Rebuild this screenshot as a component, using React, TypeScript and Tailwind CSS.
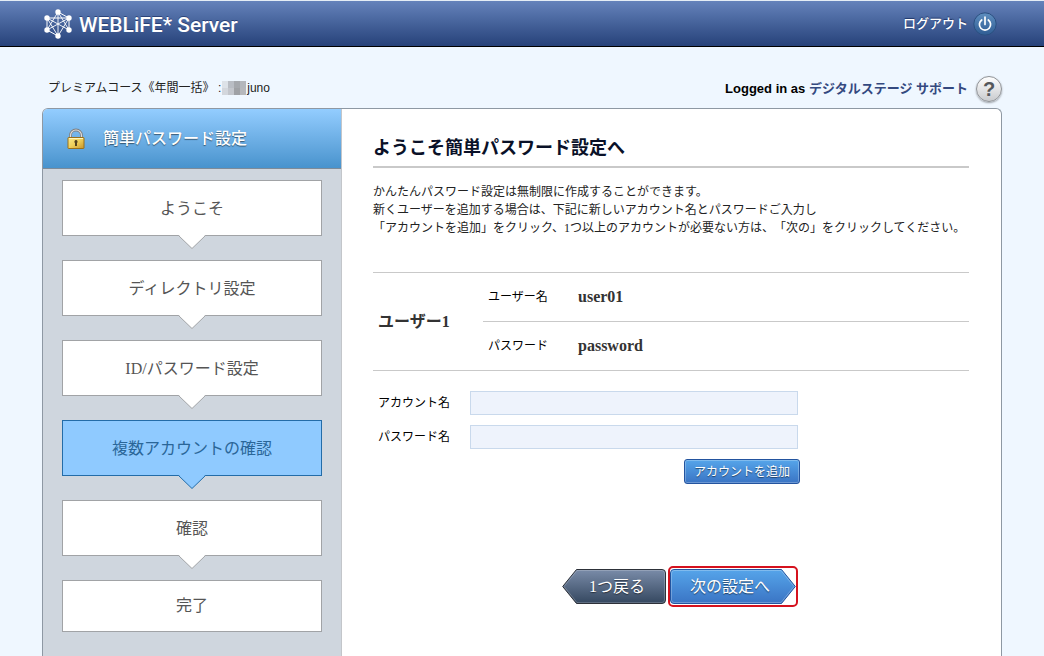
import { useState } from "react";
import type { ReactNode } from "react";

const steps = [
  { id: "welcome", label: "ようこそ" },
  { id: "directory", label: "ディレクトリ設定" },
  { id: "password", label: "ID/パスワード設定" },
  { id: "accounts", label: "複数アカウントの確認" },
  { id: "confirm", label: "確認" },
  { id: "done", label: "完了" },
];

const users = [{ title: "ユーザー1", name: "user01", password: "password" }];

const mosaic = [
  "bg-[#dde2e8]",
  "bg-[#b9bdc4]",
  "bg-[#a5a8ad]",
  "bg-[#b4b7bc]",
  "bg-[#d3d7dd]",
  "bg-[#c3c6cc]",
  "bg-[#9fa1a5]",
  "bg-[#b6b8bc]",
];

const nodes = [
  [14, 3],
  [3, 9],
  [25, 9],
  [3, 21],
  [25, 21],
  [14, 27],
];

function Logo() {
  return (
    <svg viewBox="0 0 28 30" className="h-[30px] w-7" aria-hidden="true">
      <g stroke="#fff" fill="none">
        <path d="M3 9h22M3 9v12M25 9v12M14 3l11 6M3 21l11 6" strokeWidth="1" />
        <path d="M3 9l22 12M25 9 3 21M14 3v24M14 3 3 21M3 9l11 18M25 9 14 27M14 3l11 18" strokeWidth="0.9" />
      </g>
      {nodes.map(([x, y]) => (
        <circle key={`${x}-${y}`} cx={x} cy={y} r="2.7" fill="#fff" />
      ))}
    </svg>
  );
}

function PowerIcon() {
  return (
    <svg viewBox="0 0 24 24" className="size-6" aria-hidden="true">
      <defs>
        <linearGradient id="power" x1="0" y1="0" x2="0" y2="1">
          <stop offset="0" stopColor="#5f8fc0" />
          <stop offset="1" stopColor="#2f5c93" />
        </linearGradient>
      </defs>
      <circle cx="12" cy="12" r="11.2" fill="url(#power)" stroke="#2b4f80" />
      <path
        d="M8.700 8a5.600 5.600 0 1 0 6.600 0M12 5v7.500"
        fill="none"
        stroke="#fff"
        strokeWidth="1.7"
        strokeLinecap="round"
      />
    </svg>
  );
}

function LockIcon() {
  return (
    <svg viewBox="0 0 18 22" className="h-[22px] w-[18px]" aria-hidden="true">
      <defs>
        <linearGradient id="lock" x1="0" y1="0" x2="1" y2="1">
          <stop offset="0" stopColor="#fdeb8c" />
          <stop offset="0.5" stopColor="#eecf5a" />
          <stop offset="1" stopColor="#c8942a" />
        </linearGradient>
      </defs>
      <path d="M3.500 10V7.500a5.500 5.500 0 0 1 11 0V10" fill="none" stroke="#7c7f82" strokeWidth="2.800" />
      <path d="M3.500 10V7.500a5.500 5.500 0 0 1 11 0V10" fill="none" stroke="#dedede" strokeWidth="1.200" />
      <rect x="1" y="9.5" width="16" height="11" rx="0.6" fill="url(#lock)" stroke="#9a701a" />
      <path d="M2 10.5h14" stroke="#fff6bd" />
      <path d="M9 12a1.700 1.700 0 0 1 1 3v3H8v-3a1.700 1.700 0 0 1 1-3z" fill="#54421c" />
    </svg>
  );
}

function Step({ label, active, last }: { label: string; active: boolean; last: boolean }) {
  return (
    <li>
      <a
        href="#"
        aria-current={active ? "step" : undefined}
        className={`flex items-center justify-center border text-base ${last ? "h-[52px]" : "h-14 pt-0.5"} ${
          active ? "border-[#236ca8] bg-[#8fcaff] text-[#2a6698]" : "border-[#a1a3a6] bg-white text-[#555]"
        }`}
      >
        {label}
      </a>
      {!last && (
        <svg
          viewBox="0 0 28 14"
          className={`relative mx-auto -mt-px block h-3.5 w-7 ${
            active ? "fill-[#8fcaff] stroke-[#236ca8]" : "fill-white stroke-[#a1a3a6]"
          }`}
          aria-hidden="true"
        >
          <path d="M1 0h26L14 13z" stroke="none" />
          <path d="M.5.5 14 13.5 27.5.5" />
        </svg>
      )}
    </li>
  );
}

function TextField({ id, label, value, onChange }: { id: string; label: string; value: string; onChange: (v: string) => void }) {
  return (
    <div className="flex items-center">
      <label htmlFor={id} className="w-[97px] shrink-0 pl-[5px] text-xs">
        {label}
      </label>
      <input
        id={id}
        type="text"
        value={value}
        onChange={(e) => onChange(e.target.value)}
        className="h-6 w-[328px] border border-[#c9d9ec] bg-[#eef3fc] px-2 text-xs outline-none"
      />
    </div>
  );
}

function ArrowButton({ direction, children }: { direction: "back" | "next"; children: ReactNode }) {
  const back = direction === "back";
  return (
    <button
      type="button"
      className={`relative isolate h-[35px] text-base leading-none text-white text-shadow-[0_1px_1px_rgb(0_0_0/0.5)] ${
        back ? "w-[104px] pl-1.5" : "w-[126px] pr-1.5"
      }`}
    >
      <svg
        viewBox={back ? "0 0 104 35" : "0 0 126 35"}
        className="absolute inset-0 -z-10 size-full"
        aria-hidden="true"
      >
        <defs>
          <linearGradient id={direction} x1="0" y1="0" x2="0" y2="1">
            <stop offset="0" stopColor={back ? "#7a8ca9" : "#56a5ea"} />
            <stop offset="1" stopColor={back ? "#34475f" : "#3a74c4"} />
          </linearGradient>
        </defs>
        {back ? (
          <>
            <path d="M14.5.5H100a3.5 3.5 0 0 1 3.5 3.5v27a3.5 3.5 0 0 1-3.5 3.5H14.5L.7 17.5z" fill="url(#back)" stroke="#2d3139" />
            <path d="M15 1.5h85a2.5 2.5 0 0 1 2.5 2.5v27a2.5 2.5 0 0 1-2.5 2.5H15l-13-16z" fill="none" stroke="#fff" strokeOpacity="0.2" />
          </>
        ) : (
          <>
            <path d="M111.5.5H4A3.5 3.5 0 0 0 .5 4v27A3.5 3.5 0 0 0 4 34.5h107.5l13.8-17z" fill="url(#next)" stroke="#23549f" />
            <path d="M111 1.5H4A2.5 2.5 0 0 0 1.5 4v27A2.5 2.5 0 0 0 4 33.5h107l13-16z" fill="none" stroke="#fff" strokeOpacity="0.25" />
          </>
        )}
      </svg>
      {children}
    </button>
  );
}

export default function App() {
  const [account, setAccount] = useState("");
  const [password, setPassword] = useState("");

  return (
    <div className="flex min-h-screen flex-col bg-[#eff7ff] font-['Liberation_Serif','Noto_Sans_CJK_JP',serif] text-black [text-spacing-trim:space-all]">
      <header className="h-[47px] border-t border-b border-t-[#e4edf5] border-b-black bg-linear-to-b from-[#6583bb] to-[#27427a] font-['Roboto','Noto_Sans_CJK_JP',sans-serif] text-white">
        <div className="mx-auto flex h-full max-w-[960px] items-center justify-between pr-[5px] pl-0.5">
          <a href="#" className="flex items-center gap-[7px] text-shadow-[0_-1px_0_rgb(20_40_90/0.6)]">
            <Logo />
            <span className="pt-0.5 text-[21px] leading-6 font-medium">WEBLiFE* Server</span>
          </a>
          <a href="#" className="flex items-center gap-[5px] text-[13px] font-medium text-shadow-[0_-1px_1px_rgb(20_40_90/0.8)]">
            ログアウト
            <PowerIcon />
          </a>
        </div>
      </header>

      <div className="mx-auto flex w-full max-w-[960px] flex-1 flex-col">
        <div className="flex h-[61px] items-end justify-between pb-1.5 pl-1.5 font-['Liberation_Sans','Noto_Sans_CJK_JP',sans-serif]">
          <p className="flex h-7 items-center text-xs text-[#222]">
            プレミアムコース《年間一括》 :
            <span className="mx-px grid w-6 grid-cols-4" aria-hidden="true">
              {mosaic.map((shade, i) => (
                <span key={i} className={`h-[7px] ${shade}`} />
              ))}
            </span>
            juno
          </p>
          <div className="flex items-center gap-2 text-[13px] font-bold">
            <p>
              Logged in as <span className="text-[#34497f]">デジタルステージ サポート</span>
            </p>
            <button
              type="button"
              aria-label="ヘルプ"
              className="flex size-[26px] items-center justify-center rounded-full border border-[#8f9296] bg-linear-to-b from-white to-[#c9cbce] text-xl leading-none text-[#55585c] shadow-[0_1px_2px_rgb(0_0_0/0.35)]"
            >
              ?
            </button>
          </div>
        </div>

        <div className="flex flex-1 overflow-hidden rounded-t-md border border-b-0 border-[#8e98a3] bg-white">
          <nav className="w-[299px] shrink-0 border-r border-[#c3c6ca] bg-[#cfd6de]">
            <h2 className="flex h-[60px] items-center gap-[18px] border-b border-[#7d8b99] bg-linear-to-b from-[#93cdff] to-[#4893cd] pl-6 text-base font-medium text-white text-shadow-[0_1px_1px_rgb(0_0_0/0.5)]">
              <LockIcon />
              簡単パスワード設定
            </h2>
            <ol className="flex flex-col gap-[11px] px-[19px] pt-[11px] pb-6">
              {steps.map((step, i) => (
                <Step
                  key={step.id}
                  label={step.label}
                  active={step.id === "accounts"}
                  last={i === steps.length - 1}
                />
              ))}
            </ol>
          </nav>

          <main className="min-w-0 flex-1 pt-[25px] pr-8 pl-[31px]">
            <h1 className="border-b-2 border-[#c9c9c9] pb-1 text-lg leading-7 font-bold text-[#0a1128]">
              ようこそ簡単パスワード設定へ
            </h1>
            <p className="mt-[15px] text-xs leading-[18px] text-[#222]">
              かんたんパスワード設定は無制限に作成することができます。
              <br />
              新くユーザーを追加する場合は、下記に新しいアカウント名とパスワードご入力し
              <br />
              「アカウントを追加」をクリック、1つ以上のアカウントが必要ない方は、「次の」をクリックしてください。
            </p>

            <table className="mt-[35px] w-full border-collapse text-left">
              {users.map((user) => (
                <tbody key={user.title} className="border-y border-[#c9c9c9]">
                  <tr className="h-[49px]">
                    <th rowSpan={2} scope="rowgroup" className="w-[110px] pl-[5px] text-base font-bold text-[#333]">
                      {user.title}
                    </th>
                    <th scope="row" className="w-[90px] border-b border-[#c9c9c9] pl-[5px] text-xs font-normal">
                      ユーザー名
                    </th>
                    <td className="border-b border-[#c9c9c9] pl-[5px] font-bold text-[#333]">{user.name}</td>
                  </tr>
                  <tr className="h-[49px]">
                    <th scope="row" className="pl-[5px] text-xs font-normal">
                      パスワード
                    </th>
                    <td className="pl-[5px] font-bold text-[#333]">{user.password}</td>
                  </tr>
                </tbody>
              ))}
            </table>

            <form className="mt-5 flex w-[427px] flex-col gap-2.5" onSubmit={(e) => e.preventDefault()}>
              <TextField id="account" label="アカウント名" value={account} onChange={setAccount} />
              <TextField id="password" label="パスワード名" value={password} onChange={setPassword} />
              <button
                type="submit"
                className="h-[25px] w-[116px] self-end rounded-[3px] border border-[#23549f] bg-linear-to-b from-[#56a5ea] to-[#3a74c4] text-xs leading-none text-white inset-shadow-[0_0_0_1px_rgb(255_255_255/0.25)] text-shadow-[0_1px_1px_rgb(0_0_0/0.5)]"
              >
                アカウントを追加
              </button>
            </form>

            <div className="mt-[82px] flex w-[425px] items-center justify-end gap-0.5">
              <ArrowButton direction="back">1つ戻る</ArrowButton>
              <div className="flex rounded-[5px] border-2 border-[#d5121e] py-px">
                <ArrowButton direction="next">次の設定へ</ArrowButton>
              </div>
            </div>
          </main>
        </div>
      </div>
    </div>
  );
}
